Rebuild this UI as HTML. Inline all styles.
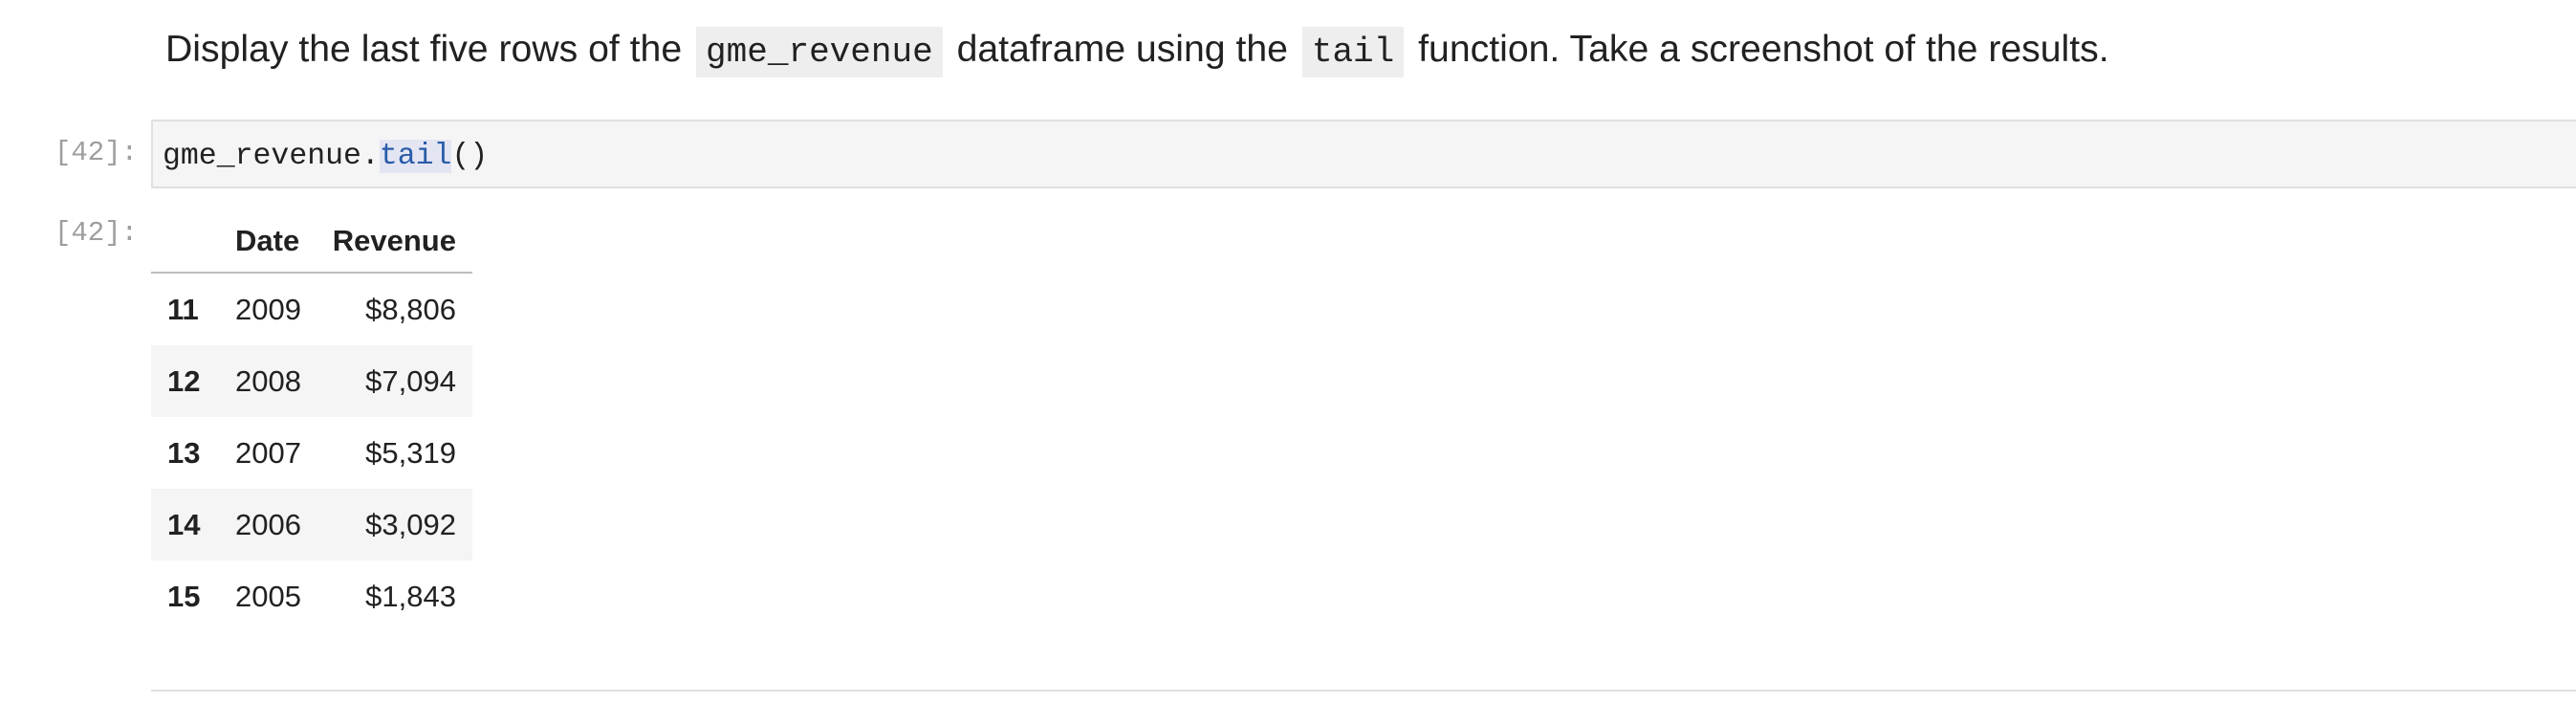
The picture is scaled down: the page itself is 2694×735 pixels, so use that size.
<!DOCTYPE html>
<html><head><meta charset="utf-8"><style>
body{margin:0;width:2694px;height:731px;background:#fff;position:relative;overflow:hidden;font-family:"Liberation Sans",sans-serif;color:#212121}
.a{position:absolute;white-space:nowrap}
.md{left:173px;top:25px;font-size:39.2px;line-height:54px}
.md code{font-family:"Liberation Mono",monospace;font-size:36px;background:#eee;padding:6px 10px;margin:0 4px}
.cell{left:158px;top:125px;width:2540px;height:68px;background:#f5f5f5;border:2px solid #e0e0e0;border-right:none}
.prompt{font-family:"Liberation Mono",monospace;font-size:29px;color:#9e9e9e}
.code{font-family:"Liberation Mono",monospace;font-size:31.5px;color:#212121;left:170px;top:145px;line-height:38px}
.code span{background:#e3e5f3;color:#2a5ca8}
table{position:absolute;left:158px;top:220px;border-collapse:collapse;font-size:31px}
th{font-weight:bold;height:64px;padding:0;border-bottom:2px solid #bdbdbd;text-align:right;vertical-align:middle}
td{height:75px;padding:0;text-align:right}
tr.g td{background:#f5f5f5}
.i{width:88px;text-align:left;padding-left:17px;font-weight:bold;box-sizing:border-box}
.d{width:69px;text-align:left}
.r{width:162px;padding-right:17px}
.bot{left:158px;top:721px;width:2540px;height:12px;border-top:2px solid #e0e0e0}
</style></head><body>
<div class="a md">Display the last five rows of the <code>gme_revenue</code> dataframe using the <code>tail</code> function. Take a screenshot of the results.</div>
<div class="a prompt" style="left:57px;top:141px;line-height:38px">[42]:</div>
<div class="a cell"></div>
<div class="a code">gme_revenue.<span>tail</span>()</div>
<div class="a prompt" style="left:57px;top:225px;line-height:38px">[42]:</div>
<table>
<tr><th class="i"></th><th class="d" style="text-align:left">Date</th><th class="r">Revenue</th></tr>
<tr><td class="i">11</td><td class="d">2009</td><td class="r">$8,806</td></tr>
<tr class="g"><td class="i">12</td><td class="d">2008</td><td class="r">$7,094</td></tr>
<tr><td class="i">13</td><td class="d">2007</td><td class="r">$5,319</td></tr>
<tr class="g"><td class="i">14</td><td class="d">2006</td><td class="r">$3,092</td></tr>
<tr><td class="i">15</td><td class="d">2005</td><td class="r">$1,843</td></tr>
</table>
<div class="a bot"></div>
</body></html>
